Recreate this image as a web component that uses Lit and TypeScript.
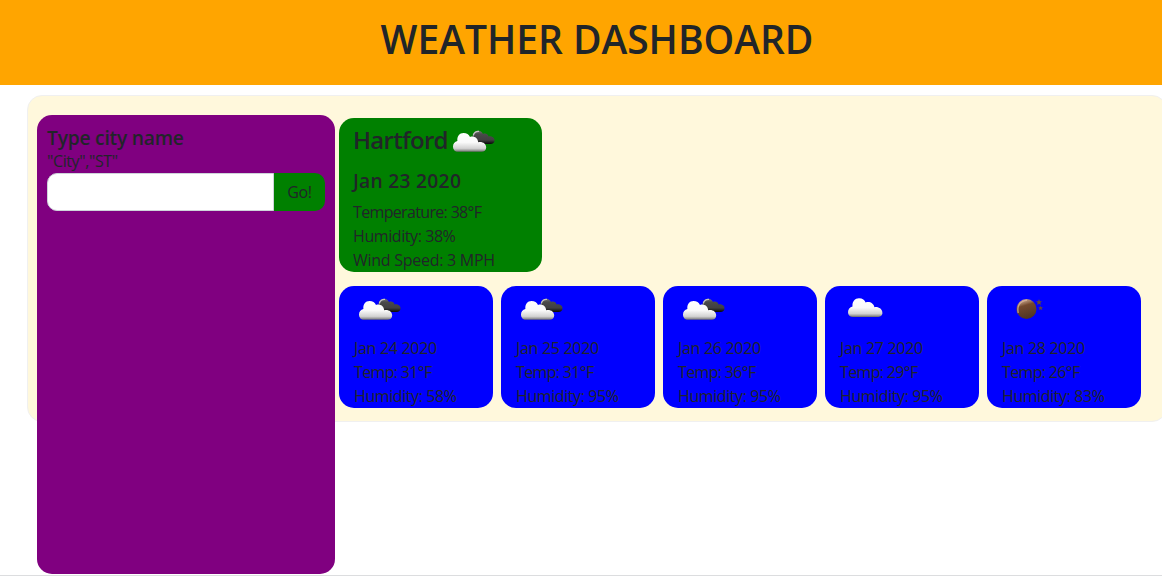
import { LitElement, html, css, svg } from "lit";
import { customElement, property } from "lit/decorators.js";

type Sky = "broken" | "cloudy" | "night";

@customElement("sky-icon")
export class SkyIcon extends LitElement {
  @property() sky: Sky = "cloudy";

  static styles = css`
    :host { display: block; width: 50px; height: 50px; }
    svg { display: block; }
  `;

  private gradients() {
    return svg`<defs>
      <linearGradient id="light" x1="0" y1="0" x2="0" y2="1">
        <stop offset="0" stop-color="#fff"/><stop offset=".5" stop-color="#fafafa"/>
        <stop offset=".82" stop-color="#d2d2d2"/><stop offset=".93" stop-color="#999"/><stop offset="1" stop-color="#686868"/>
      </linearGradient>
      <linearGradient id="dark" x1="0" y1="0" x2="0" y2="1">
        <stop offset="0" stop-color="#777"/><stop offset=".25" stop-color="#4a4a4a"/>
        <stop offset=".7" stop-color="#404040"/><stop offset="1" stop-color="#080808"/>
      </linearGradient>
      <linearGradient id="moon" x1=".2" y1="0" x2=".5" y2="1">
        <stop offset="0" stop-color="#d9b8a4"/><stop offset=".25" stop-color="#987055"/>
        <stop offset=".36" stop-color="#74492e"/><stop offset="1" stop-color="#4e3424"/>
      </linearGradient>
    </defs>`;
  }

  private shapes() {
    if (this.sky === "broken") {
      return svg`
        <path fill="url(#dark)" d="M24.5 19.5C24.5 15.5 26.5 12.7 30 12.7C32.5 12.7 34.2 14 35 16C37.3 15 39.9 16 40.5 18.4C43.5 17.8 46.5 19.6 46.5 22.2C46.5 24.7 44.9 25.9 42.5 25.9H30.5Z"/>
        <path fill="none" stroke="#c4c4c4" stroke-width="1.3" d="M25.3 17.5C26 14.6 28 13.2 31 13.4"/>
        <path fill="url(#light)" d="M10 33.8C7.1 33.8 5 31.6 5 28.4C5 25.7 6.7 23.6 9.4 22.9C8.8 18.2 11.5 14.9 15.5 14.9C18.7 14.9 20.9 16.3 22 18.9C25.8 17.6 29.8 19.8 30.2 24.2C34.6 23.4 38.2 25.6 38.2 29.4C38.2 32.1 36.1 33.8 33.5 33.8Z"/>`;
    }
    if (this.sky === "night") {
      return svg`
        <circle cx="24.5" cy="23" r="10" fill="url(#moon)"/>
        <path fill="none" stroke="#d8b49c" stroke-opacity=".8" stroke-width="1.3" d="M16.2 27C14.6 19.5 18.6 14.7 25 14.3"/>
        <path fill="#62483c" d="M37 13L37.8 15.2L40 15.2L38.3 16.7L39 19L37 17.7L35 19L35.7 16.7L34 15.2L36.2 15.2Z"/>
        <path fill="#62483c" d="M38.6 19.8L39.3 21.3L41 21.3L39.7 22.4L40.3 24.1L38.6 23.2L37 24.1L37.5 22.4L36.2 21.3L38 21.3Z"/>`;
    }
    return svg`
      <path fill="url(#light)" d="M13 31C10 31 8 29.2 8 26.3C8 23.4 9.8 21.2 12.5 20.6C12 15.5 15 12.3 19 12.3C22.7 12.3 24.6 14.2 25.6 16.4C29.4 15 33.8 17 34.4 21.2C38.6 20.6 42.4 23 42.4 27C42.4 29.6 40 31 37.5 31Z"/>`;
  }

  render() {
    return html`<svg width="50" height="50" viewBox="0 0 50 50" aria-hidden="true">${this.gradients()}${this.shapes()}</svg>`;
  }
}

interface Day { date: string; temp: number; humidity: number; sky: Sky; }

const FORECAST: Day[] = [
  { date: "Jan 24 2020", temp: 31, humidity: 58, sky: "broken" },
  { date: "Jan 25 2020", temp: 31, humidity: 95, sky: "broken" },
  { date: "Jan 26 2020", temp: 36, humidity: 95, sky: "broken" },
  { date: "Jan 27 2020", temp: 29, humidity: 95, sky: "cloudy" },
  { date: "Jan 28 2020", temp: 26, humidity: 83, sky: "night" },
];

@customElement("app-root")
export class AppRoot extends LitElement {
  static styles = css`
    :host {
      display: block;
      height: 582px;
      overflow: hidden;
      box-sizing: border-box;
      background: #fff;
      color: #212529;
      font: 400 16px/24px "Open Sans", "Noto Sans", sans-serif;
      letter-spacing: -0.3px;
    }
    * { box-sizing: border-box; }
    h1, h2, h3, p { margin: 0; white-space: nowrap; }
    .banner { height: 85px; padding: 15px 0 0 32px; background: orange; text-align: center; }
    h1 { font-size: 39px; line-height: 48px; font-weight: 600; letter-spacing: -0.03px; }
    .page { height: 491px; border-bottom: 1px solid #dcdddf; padding: 10px 0 0 27px; }
    .board {
      display: flex; align-items: flex-start; width: 1140px; height: 327px;
      border: 1px solid #f0f0f0; border-radius: 15px; background: cornsilk;
    }
    .search {
      flex: none; width: 298px; height: 459px; margin: 19px 0 0 9px; padding: 11px 10px;
      border-radius: 15px; background: purple;
    }
    .label { font-size: 19.2px; line-height: 24px; font-weight: 600; letter-spacing: -0.2px; }
    .hint { height: 23px; line-height: 22px; letter-spacing: -0.4px; }
    .entry { display: flex; height: 38px; }
    input {
      flex: 1; min-width: 0; padding: 6px 12px; font: inherit; background: #fff;
      border: 1px solid #ced4da; border-radius: 10px 0 0 10px; outline: none;
    }
    button {
      width: 51px; padding: 0; border: 0; border-radius: 0 10px 10px 0; background: green;
      color: inherit; font: inherit; letter-spacing: inherit;
    }
    .report { padding: 22px 0 0 4px; }
    .today { width: 203px; height: 154px; padding: 0 14px; border-radius: 15px; background: green; }
    .place { display: flex; height: 50px; }
    .city { width: 95px; font-size: 24px; line-height: 43px; font-weight: 600; letter-spacing: -0.7px; }
    .date { font-size: 19.2px; line-height: 24px; font-weight: 600; letter-spacing: 0.3px; margin: 1px 0 7px; }
    .days { display: flex; gap: 8px; margin-top: 14px; }
    .day { width: 154px; height: 122px; padding: 0 15px; border-radius: 15px; background: blue; }
    .temperature { letter-spacing: -0.66px; }
    .humidity { letter-spacing: -0.42px; }
    .wind { letter-spacing: -0.27px; }
  `;

  render() {
    return html`
      <header class="banner"><h1>WEATHER DASHBOARD</h1></header>
      <div class="page">
        <main class="board">
          <section class="search">
            <h3 class="label">Type city name</h3>
            <p class="hint">"City","ST"</p>
            <div class="entry"><input type="text" aria-label="City" /><button>Go!</button></div>
          </section>
          <section class="report">
            <div class="today">
              <div class="place"><h2 class="city">Hartford</h2><sky-icon sky="broken"></sky-icon></div>
              <h3 class="date">Jan 23 2020</h3>
              <p class="temperature">Temperature: 38°F</p>
              <p class="humidity">Humidity: 38%</p>
              <p class="wind">Wind Speed: 3 MPH</p>
            </div>
            <div class="days">
              ${FORECAST.map((d) => html`
                <article class="day">
                  <sky-icon .sky=${d.sky}></sky-icon>
                  <p>${d.date}</p>
                  <p class="temperature">Temp: ${d.temp}°F</p>
                  <p class="humidity">Humidity: ${d.humidity}%</p>
                </article>`)}
            </div>
          </section>
        </main>
      </div>
    `;
  }
}
